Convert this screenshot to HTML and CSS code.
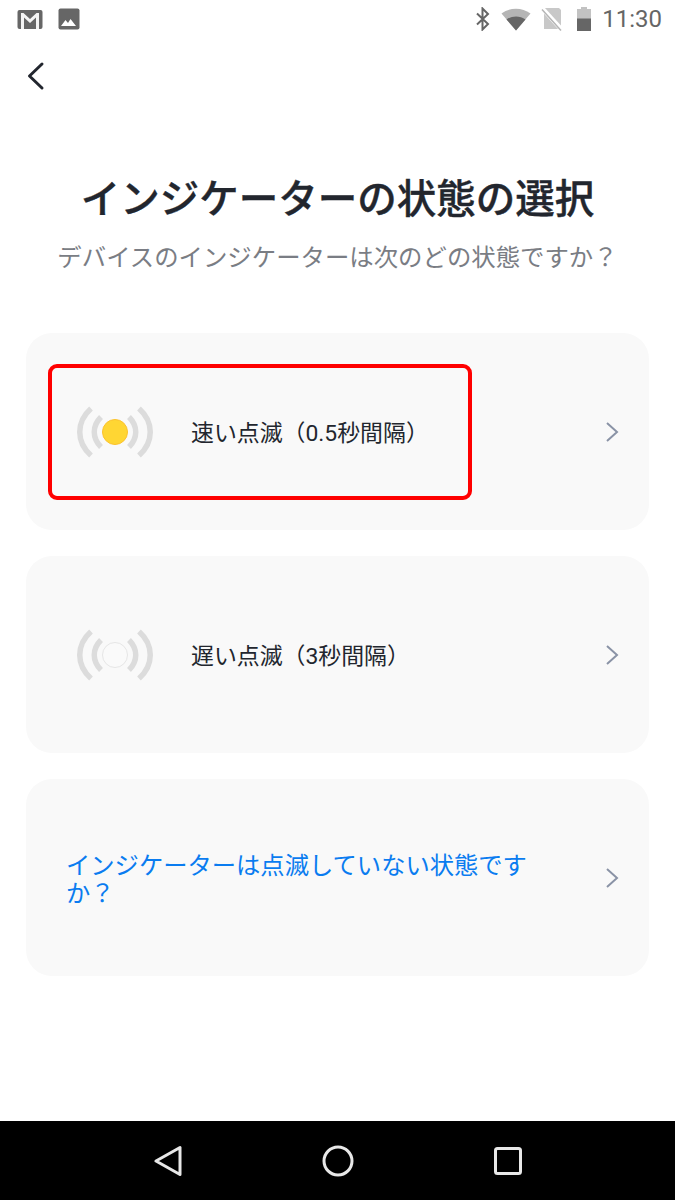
FILE: index.html
```html
<!DOCTYPE html>
<html lang="ja">
<head>
    <meta charset="UTF-8">
    <meta name="viewport" content="width=device-width, initial-scale=1.0">
    <title>インジケーターの状態の選択</title>
    <link rel="stylesheet" href="styles.css">
</head>
<body>
    <div class="page">
        <div class="status-bar">
            <div class="status-left">
                <svg width="26" height="20" viewBox="0 0 26 20"><rect x="0.500" y="1" width="25" height="19" rx="2" fill="#666"/><path d="M4 20V4h2.500L13 10l6.500-6H22v16h-3V8.500L13 14 7 8.500V20z" fill="#f4f4f4"/></svg>
                <svg width="22" height="22" viewBox="0 0 22 22"><rect x="0.500" y="0.500" width="21" height="21" rx="2" fill="#666"/><path d="M3 18l4.500-6 2.500 3 2.500-4 5.500 7z" fill="#fff"/></svg>
            </div>
            <div class="status-right">
                <svg width="16" height="24" viewBox="0 0 16 24"><path d="M2 6.500l11 10.500-5.500 5.500V1.500L13 7 2 17.500" fill="none" stroke="#666" stroke-width="2"/></svg>
                <svg width="30" height="24" viewBox="0 0 30 24"><path d="M0.500 6.500C9 0 21 0 29.500 6.500L15 23.500z" fill="#b5b5b5"/><path d="M5.500 12.500c5.500-4 13.500-4 19 0L15 23.500z" fill="#666"/></svg>
                <svg class="no-sim" width="22" height="24" viewBox="0 0 22 24"><path d="M3 1h15l2 2v19H3z" fill="#c8c8c8"/><path d="M0 0l21 23" stroke="#fff" stroke-width="4.500"/><path d="M1 2.500l19 21" stroke="#b5b5b5" stroke-width="1.500"/></svg>
                <svg class="battery" width="16" height="25" viewBox="0 0 16 25"><path d="M5 0h6v2h4v22H1V2h4z" fill="#c2c2c2"/><path d="M1 11.500h14V24H1z" fill="#666"/></svg>
                <span class="clock">11:30</span>
            </div>
        </div>

        <div class="top-bar">
            <svg width="20" height="30" viewBox="0 0 20 30"><path d="M17 3L4.500 15 17 27" fill="none" stroke="#22262e" stroke-width="3" stroke-linecap="round" stroke-linejoin="round"/></svg>
        </div>

        <main class="content">
            <h1 class="title">インジケーターの状態の選択</h1>
            <p class="subtitle">デバイスのインジケーターは次のどの状態ですか？</p>

            <div class="cards">
                <div class="card">
                    <div class="card-main highlight">
                        <svg class="signal" width="78" height="52" viewBox="0 0 78 52">
                            <path d="M15 2.500C0 16 0 36 15 49.500M63 2.500c15 13.500 15 33.500 0 47M25 11c-9 9-9 21 0 30M53 11c9 9 9 21 0 30" fill="none" stroke="#dcdcdc" stroke-width="5.500"/>
                            <circle cx="39" cy="26" r="12.500" fill="#ffd633" stroke="#fcc22c" stroke-width="1"/>
                        </svg>
                        <span class="card-text">速い点滅（0.5秒間隔）</span>
                    </div>
                    <svg class="chevron" width="14" height="22" viewBox="0 0 14 22"><path d="M2 2l10 9-10 9" fill="none" stroke="#8a93a6" stroke-width="2"/></svg>
                </div>

                <div class="card">
                    <div class="card-main">
                        <svg class="signal" width="78" height="52" viewBox="0 0 78 52">
                            <path d="M15 2.500C0 16 0 36 15 49.500M63 2.500c15 13.500 15 33.500 0 47M25 11c-9 9-9 21 0 30M53 11c9 9 9 21 0 30" fill="none" stroke="#dcdcdc" stroke-width="5.500"/>
                            <circle cx="39" cy="26" r="12.500" fill="#fafafa" stroke="#e6e6e6" stroke-width="1"/>
                        </svg>
                        <span class="card-text">遅い点滅（3秒間隔）</span>
                    </div>
                    <svg class="chevron" width="14" height="22" viewBox="0 0 14 22"><path d="M2 2l10 9-10 9" fill="none" stroke="#8a93a6" stroke-width="2"/></svg>
                </div>

                <div class="card">
                    <div class="card-link">インジケーターは点滅していない状態ですか？</div>
                    <svg class="chevron" width="14" height="22" viewBox="0 0 14 22"><path d="M2 2l10 9-10 9" fill="none" stroke="#8a93a6" stroke-width="2"/></svg>
                </div>
            </div>
        </main>

        <div class="nav-bar">
            <svg width="28" height="32" viewBox="0 0 28 32"><path d="M26 2.500v27L2 16z" fill="none" stroke="#e8e8e8" stroke-width="3" stroke-linejoin="round"/></svg>
            <svg width="32" height="32" viewBox="0 0 32 32"><circle cx="16" cy="16" r="14" fill="none" stroke="#e8e8e8" stroke-width="3"/></svg>
            <svg width="28" height="28" viewBox="0 0 28 28"><rect x="1.500" y="1.500" width="25" height="25" rx="2" fill="none" stroke="#e8e8e8" stroke-width="3"/></svg>
        </div>
    </div>
</body>
</html>
```

FILE: styles.css
```css
* {
    box-sizing: border-box;
}

body {
    margin: 0;
    background-color: #fff;
    font-family: Roboto, "Noto Sans CJK JP", sans-serif;
}

.page {
    width: 675px;
    height: 1200px;
    display: flex;
    flex-direction: column;
}

.status-bar {
    height: 38px;
    display: flex;
    justify-content: space-between;
    align-items: center;
    padding: 0 13px 0 17px;
    flex-shrink: 0;
}

.status-left {
    display: flex;
    align-items: center;
    gap: 15px;
}

.status-right {
    display: flex;
    align-items: center;
    gap: 10px;
}

.battery {
    margin-left: 3px;
}

.clock {
    font-size: 24px;
    color: #666;
}

.top-bar {
    height: 76px;
    padding: 23px 0 0 25px;
    flex-shrink: 0;
}

.content {
    flex: 1;
    padding: 0 26px;
}

.title {
    margin: 59px 0 0;
    font-size: 39.5px;
    line-height: 54px;
    font-weight: 500;
    -webkit-text-stroke: 0.4px #22262e;
    color: #22262e;
    text-align: center;
}

.subtitle {
    margin: 14px 0 0;
    font-size: 24.4px;
    line-height: 34px;
    color: #7a7d84;
    text-align: center;
    white-space: nowrap;
}

.cards {
    margin-top: 58px;
    display: flex;
    flex-direction: column;
    gap: 26px;
}

.card {
    height: 197px;
    background-color: #f9f9f9;
    border-radius: 26px;
    display: flex;
    align-items: center;
    justify-content: space-between;
    padding: 0 30px 0 22px;
}

.card-main {
    width: 424px;
    height: 136px;
    display: flex;
    align-items: center;
    padding-left: 24px;
    border: 4px solid transparent;
    border-radius: 9px;
}

.highlight {
    border-color: #ff0000;
}

.signal {
    flex-shrink: 0;
}

.card-text {
    margin: -2px 0 0 37px;
    font-size: 22.9px;
    color: #22262e;
    white-space: nowrap;
}

.card-link {
    width: 470px;
    margin: 4px 0 0 18px;
    font-size: 24.3px;
    line-height: 28px;
    color: #0a7cf0;
}

.nav-bar {
    height: 79px;
    background-color: #000;
    display: flex;
    align-items: center;
    justify-content: space-between;
    padding: 0 153px 0 154px;
    flex-shrink: 0;
}
```
